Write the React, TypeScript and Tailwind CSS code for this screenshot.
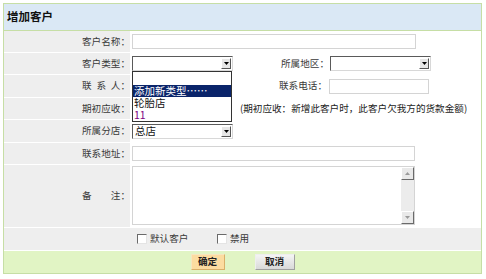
import React from "react";

const FONT = { fontFamily: '"Noto Sans CJK SC", "Noto Sans", sans-serif' };

function Arrow() {
  return (
    <span className="absolute right-[1px] top-[1px] w-[10px] h-[11px] bg-[#e6e6e6] border border-t-white border-l-white border-r-[#555] border-b-[#555] flex items-center justify-center">
      <svg width="5" height="3" viewBox="0 0 5 3">
        <path d="M0 0 L5 0 L2.5 3 Z" fill="#000" />
      </svg>
    </span>
  );
}

function Select({ className, text }: { className: string; text?: string }) {
  return (
    <div
      className={
        "relative h-[15px] bg-white border border-t-[#5a5a5a] border-l-[#5a5a5a] border-r-[#d8d8d8] border-b-[#d8d8d8] flex items-center pl-[2px] text-[#111] text-[10.5px] " +
        className
      }
    >
      <span className="leading-none">{text}</span>
      <Arrow />
    </div>
  );
}

function Input({ className }: { className: string }) {
  return <div className={"h-[15px] bg-white border border-[#d4d4d4] " + className} />;
}

function Row({
  h,
  label,
  children,
  gray,
  align,
}: {
  h: string;
  label: string;
  children?: React.ReactNode;
  gray?: boolean;
  align?: string;
}) {
  return (
    <div className={"flex border-b border-white " + h}>
      <div className="w-[126px] bg-[#eeeeee] flex items-center justify-end whitespace-pre text-[#3a3a3a]">
        {label}
      </div>
      <div
        className={
          "flex-1 flex pl-[2px] " +
          (align ?? "items-center") +
          " " +
          (gray ? "bg-[#eeeeee]" : "bg-white")
        }
      >
        {children}
      </div>
    </div>
  );
}

function Check({ label }: { label: string }) {
  return (
    <div className="flex items-center gap-[3px]">
      <span className="w-[10px] h-[10px] bg-white border border-t-[#6a6a6a] border-l-[#6a6a6a] border-r-[#e4e4e4] border-b-[#e4e4e4]" />
      <span className="text-[#3a3a3a] leading-none">{label}</span>
    </div>
  );
}

function ScrollBtn({ up }: { up?: boolean }) {
  return (
    <div className="h-[13px] w-full bg-[#e9e9e9] border border-t-white border-l-white border-r-[#6a6a6a] border-b-[#6a6a6a] flex items-center justify-center">
      <svg width="5" height="3" viewBox="0 0 5 3">
        <path d={up ? "M0 3 L5 3 L2.5 0 Z" : "M0 0 L5 0 L2.5 3 Z"} fill="#9a9a9a" />
      </svg>
    </div>
  );
}

export default function App() {
  return (
    <div className="w-[486px] h-[279px] bg-white text-[9.6px] leading-none" style={FONT}>
      <div className="ml-[3px] pt-[3px] w-[479px]">
        <div className="border border-[#c6dea5]">
          <div className="h-[27px] bg-[#dae8f5] border-b border-[#c6dea5] flex items-center pl-[3px] text-[11.5px] font-bold text-[#111]">
            增加客户
          </div>

          <Row h="h-[22px]" label="客户名称：">
            <Input className="w-[284px]" />
          </Row>

          <Row h="h-[22px]" label="客户类型：">
            <div className="relative">
              <Select className="w-[101px]" />
              <div className="absolute left-0 top-[15px] w-[100px] z-10 bg-white border border-[#333] flex flex-col text-[10.5px]">
                <div className="h-[13px]" />
                <div className="h-[12px] bg-[#0a246a] text-white flex items-center pl-[1px] whitespace-nowrap">添加新类型……</div>
                <div className="h-[12px] text-[#111] flex items-center pl-[1px]">轮胎店</div>
                <div className="h-[12px] text-[#800080] flex items-center pl-[1px]">11</div>
              </div>
            </div>
            <div className="w-[96px] text-right whitespace-pre text-[#3a3a3a]">所属地区：</div>
            <Select className="w-[101px] ml-[1px]" />
          </Row>

          <Row h="h-[23px]" label={"联\u2002系\u2002人："}>
            <div className="w-[101px]" />
            <div className="w-[94px] text-right text-[#3a3a3a]">联系电话：</div>
            <Input className="w-[100px] ml-[2px]" />
          </Row>

          <Row h="h-[22px]" label="期初应收：">
            <div className="w-[101px]" />
            <div className="ml-[7px] text-[#222] whitespace-nowrap">(期初应收：新增此客户时，此客户欠我方的货款金额)</div>
          </Row>

          <Row h="h-[23px]" label="所属分店：">
            <Select className="w-[101px]" text="总店" />
          </Row>

          <Row h="h-[22px]" label="联系地址：">
            <Input className="w-[283px]" />
          </Row>

          <Row h="h-[63px]" label={"备\u3000\u3000注："} align="items-start">
            <div className="mt-[1px] w-[283px] h-[59px] bg-white border border-[#d4d4d4] flex justify-end">
              <div className="w-[13px] h-full bg-[#ececec] flex flex-col justify-between">
                <ScrollBtn up />
                <ScrollBtn />
              </div>
            </div>
          </Row>

          <Row h="h-[23px]" label="" gray>
            <div className="pl-[5px] w-[85px]">
              <Check label="默认客户" />
            </div>
            <Check label="禁用" />
          </Row>

          <div className="h-[22px] bg-[#e1f4c4] flex items-center justify-center gap-[30px]">
            <button className="w-[34px] h-[16px] bg-[#fcdca0] border border-t-[#f6e6c0] border-l-[#f6e6c0] border-r-[#d9b06a] border-b-[#d9b06a] font-bold text-[#222] text-[9.6px] leading-none">
              确定
            </button>
            <button className="w-[40px] h-[16px] bg-gradient-to-b from-[#f4f4f4] to-[#d9d9d9] border border-t-[#eeeeee] border-l-[#eeeeee] border-r-[#a0a0a0] border-b-[#a0a0a0] font-bold text-[#222] text-[9.6px] leading-none">
              取消
            </button>
          </div>
        </div>
      </div>
    </div>
  );
}
